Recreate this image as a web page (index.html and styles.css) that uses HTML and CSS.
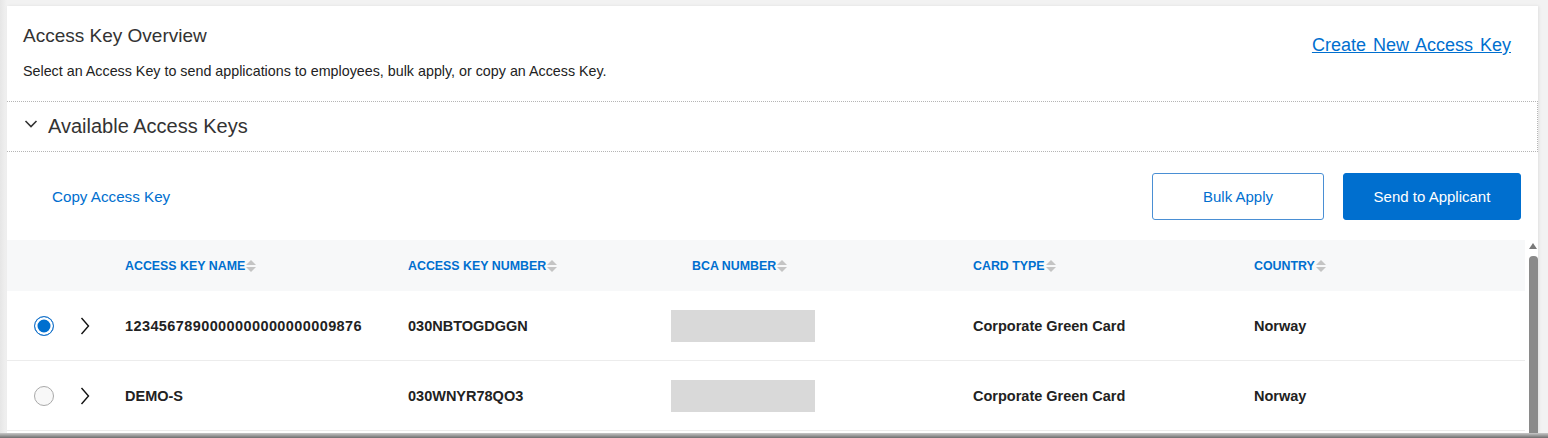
FILE: index.html
```html
<!DOCTYPE html>
<html lang="en">
<head>
    <meta charset="UTF-8">
    <meta name="viewport" content="width=device-width, initial-scale=1.0">
    <title>Access Key Overview</title>
    <link rel="stylesheet" href="styles.css">
</head>
<body>
    <div class="frame">
        <div class="card">
            <div class="overview">
                <div class="overview-text">
                    <h1>Access Key Overview</h1>
                    <p>Select an Access Key to send applications to employees, bulk apply, or copy an Access Key.</p>
                </div>
                <a class="create-link" href="#">Create New Access Key</a>
            </div>

            <div class="section-head">
                <svg class="chev-down" width="14" height="10" viewBox="0 0 14 10">
                    <polyline points="1.5,2 7,7.5 12.5,2" fill="none" stroke="#333" stroke-width="1.6"/>
                </svg>
                <span>Available Access Keys</span>
            </div>

            <div class="actions">
                <a class="copy-link" href="#">Copy Access Key</a>
                <div class="buttons">
                    <button class="btn btn-outline">Bulk Apply</button>
                    <button class="btn btn-primary">Send to Applicant</button>
                </div>
            </div>

            <div class="table-area">
                <div class="table">
                    <div class="row head">
                        <div class="cell"></div>
                        <div class="cell">ACCESS KEY NAME<span class="sort"></span></div>
                        <div class="cell">ACCESS KEY NUMBER<span class="sort"></span></div>
                        <div class="cell bca">BCA NUMBER<span class="sort"></span></div>
                        <div class="cell">CARD TYPE<span class="sort"></span></div>
                        <div class="cell">COUNTRY<span class="sort"></span></div>
                    </div>
                    <div class="row">
                        <div class="cell select">
                            <span class="radio checked"></span>
                            <svg class="chev-right" width="10" height="18" viewBox="0 0 10 18">
                                <polyline points="1.5,1 8.5,9 1.5,17" fill="none" stroke="#111" stroke-width="1.4"/>
                            </svg>
                        </div>
                        <div class="cell key-name">1234567890000000000000009876</div>
                        <div class="cell">030NBTOGDGGN</div>
                        <div class="cell"><span class="masked"></span></div>
                        <div class="cell">Corporate Green Card</div>
                        <div class="cell">Norway</div>
                    </div>
                    <div class="row">
                        <div class="cell select">
                            <span class="radio"></span>
                            <svg class="chev-right" width="10" height="18" viewBox="0 0 10 18">
                                <polyline points="1.5,1 8.5,9 1.5,17" fill="none" stroke="#111" stroke-width="1.4"/>
                            </svg>
                        </div>
                        <div class="cell">DEMO-S</div>
                        <div class="cell">030WNYR78QO3</div>
                        <div class="cell"><span class="masked"></span></div>
                        <div class="cell">Corporate Green Card</div>
                        <div class="cell">Norway</div>
                    </div>
                </div>
                <div class="scrollbar">
                    <span class="scroll-up"></span>
                    <span class="scroll-thumb"></span>
                </div>
            </div>
        </div>
    </div>
    <div class="bottom-edge"></div>
</body>
</html>
```

FILE: styles.css
```css
body {
    margin: 0;
    background: linear-gradient(90deg, #e6e6e6, #f2f2f2 7px, #f2f2f2);
    font-family: 'Liberation Sans', Arial, sans-serif;
    color: #333;
    height: 438px;
    overflow: hidden;
}
.frame {
    padding: 6px 10px 0 7px;
}
.card {
    background: white;
    height: 427px;
    display: flex;
    flex-direction: column;
    box-shadow: 1px 0 3px rgba(0,0,0,0.08);
}
.overview {
    height: 95px;
    display: flex;
    justify-content: space-between;
    padding: 0 27px 0 16px;
}
.overview h1 {
    margin: 18px 0 0;
    font-size: 19px;
    font-weight: normal;
    line-height: 24px;
    color: #333;
}
.overview p {
    margin: 14px 0 0;
    font-size: 14.3px;
    line-height: 18px;
    color: #222;
}
.create-link {
    margin-top: 28px;
    font-size: 18px;
    line-height: 22px;
    height: 22px;
    color: #006fcf;
    text-decoration: underline;
    word-spacing: 2px;
}
.section-head {
    height: 49px;
    display: flex;
    align-items: center;
    padding-left: 17px;
    border-top: 1px dotted #b5b5b5;
    border-bottom: 1px dotted #b5b5b5;
    border-right: 1px dotted #b5b5b5;
    font-size: 20px;
    color: #333;
}
.chev-down {
    margin: -6px 10px 0 0;
}
.actions {
    height: 88px;
    display: flex;
    align-items: center;
    justify-content: space-between;
    padding: 0 17px 0 45px;
}
.copy-link {
    font-size: 15.2px;
    color: #006fcf;
    text-decoration: none;
}
.buttons {
    display: flex;
    gap: 19px;
}
.btn {
    height: 47px;
    border-radius: 3px;
    font-family: 'Liberation Sans', Arial, sans-serif;
    font-size: 15px;
    cursor: pointer;
}
.btn-outline {
    width: 172px;
    background: white;
    border: 1px solid #4a8fd4;
    color: #006fcf;
}
.btn-primary {
    width: 178px;
    background: #006fcf;
    border: 1px solid #006fcf;
    color: white;
}
.table-area {
    flex: 1;
    display: flex;
    overflow: hidden;
}
.table {
    width: 1518px;
}
.row {
    display: grid;
    grid-template-columns: 118px 283px 263px 302px 281px 1fr;
    height: 69px;
    align-items: center;
    border-bottom: 1px solid #ececec;
    font-size: 14.5px;
    font-weight: bold;
    color: #222;
}
.row.head {
    height: 51px;
    border-bottom: none;
    background: #f7f8f9;
    font-size: 12.4px;
    color: #006fcf;
}
.head .cell {
    display: flex;
    align-items: center;
}
.head .bca {
    padding-left: 21px;
}
.key-name {
    letter-spacing: 0.4px;
}
.sort {
    display: inline-block;
    width: 10px;
    height: 14px;
    margin-left: 1px;
    position: relative;
}
.sort::before,
.sort::after {
    content: "";
    position: absolute;
    left: 0;
    border-left: 5px solid transparent;
    border-right: 5px solid transparent;
}
.sort::before {
    top: 1px;
    border-bottom: 5px solid #c4c4c4;
}
.sort::after {
    top: 8px;
    border-top: 5px solid #c4c4c4;
}
.select {
    display: flex;
    align-items: center;
    padding-left: 27px;
}
.radio {
    width: 18px;
    height: 18px;
    border-radius: 50%;
    border: 1px solid #a9a9a9;
    background: #f8f8f8;
}
.radio.checked {
    border-color: #1a73c9;
    background: #006fcf;
    box-shadow: inset 0 0 0 2.5px white;
}
.chev-right {
    margin-left: 26px;
}
.masked {
    display: block;
    width: 144px;
    height: 32px;
    background: #d9d9d9;
}
.scrollbar {
    width: 10px;
    margin-left: 3px;
    display: flex;
    flex-direction: column;
    align-items: center;
}
.scroll-up {
    margin-top: 3px;
    border-left: 4px solid transparent;
    border-right: 4px solid transparent;
    border-bottom: 6px solid #7a7a7a;
}
.scroll-thumb {
    flex: 1;
    width: 9px;
    margin-top: 7px;
    background: #8a8a8a;
    border-radius: 4px 4px 0 0;
}
.bottom-edge {
    height: 5px;
    background: linear-gradient(#c8c8c8, #6e6e6e);
}
```
